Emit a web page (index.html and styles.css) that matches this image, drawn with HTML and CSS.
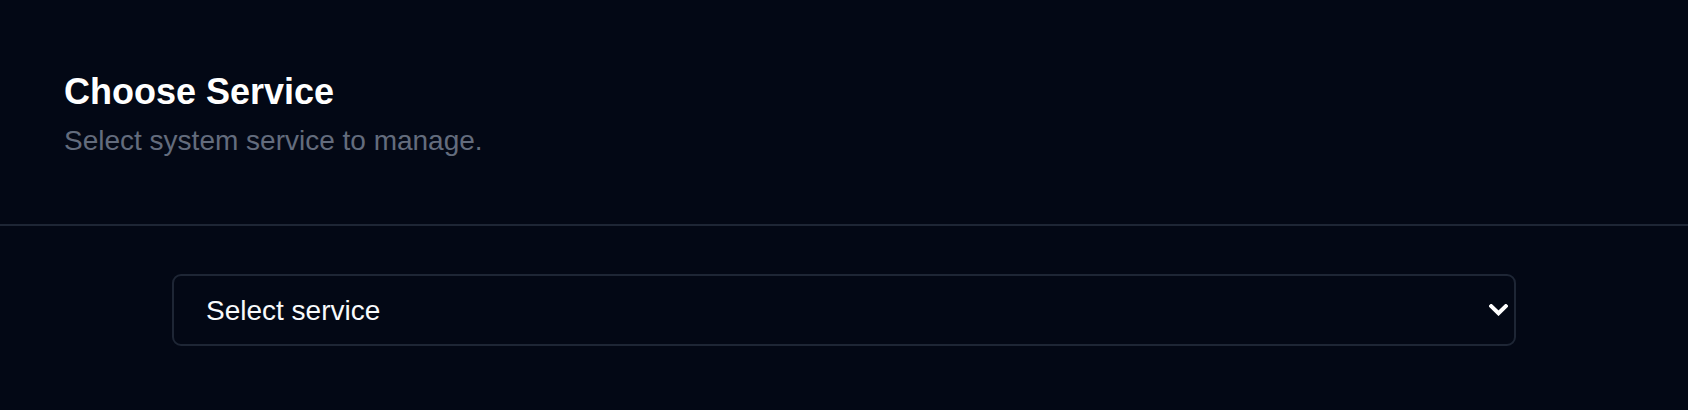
FILE: index.html
```html
<!DOCTYPE html>
<html lang="en">
<head>
<meta charset="utf-8">
<title>Choose Service</title>
<link rel="stylesheet" href="styles.css">
</head>
<body>
<div class="page">
  <header class="header">
    <h1 class="title">Choose Service</h1>
    <p class="subtitle">Select system service to manage.</p>
  </header>
  <main class="content">
    <div class="select-wrap">
      <select class="select">
        <option>Select service</option>
      </select>
      <svg class="chevron" width="19" height="12" viewBox="0 0 19 12" aria-hidden="true">
        <polyline points="2.2,2.2 9.5,9.3 16.8,2.2" fill="none" stroke="#ffffff" stroke-width="4" stroke-linecap="square" stroke-linejoin="miter"/>
      </svg>
    </div>
  </main>
</div>
</body>
</html>
```

FILE: styles.css
```css
html, body {
  margin: 0;
  padding: 0;
  background: #030815;
}
body {
  font-family: "Liberation Sans", Arial, sans-serif;
  color: #ffffff;
  height: 410px;
  overflow: hidden;
}
.page {
  display: flex;
  flex-direction: column;
}
.header {
  padding: 72px 64px 65px 64px;
  border-bottom: 2px solid #1e2635;
}
.title {
  margin: 0 0 11px 0;
  font-size: 36px;
  line-height: 40px;
  font-weight: 700;
  color: #ffffff;
}
.subtitle {
  margin: 0;
  font-size: 28px;
  line-height: 36px;
  color: #636c7d;
}
.content {
  padding: 48px 172px 0 172px;
}
.select-wrap {
  position: relative;
}
.select {
  display: block;
  width: 100%;
  height: 72px;
  box-sizing: border-box;
  margin: 0;
  padding: 0 60px 0 32px;
  background: #030815;
  color: #f8fafc;
  border: 2px solid #1e2635;
  border-radius: 9px;
  font-family: "Liberation Sans", Arial, sans-serif;
  font-size: 28px;
  -webkit-appearance: none;
  appearance: none;
  outline: none;
}
.chevron {
  position: absolute;
  right: 8px;
  top: 30px;
  pointer-events: none;
}
```
